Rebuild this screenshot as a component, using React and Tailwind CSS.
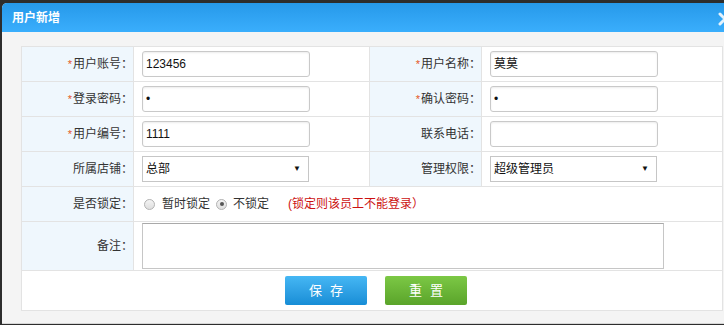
import React from "react";

const cjk = "font-['Liberation_Sans','Noto_Sans_CJK_SC',sans-serif]";

function Label({ required, children }) {
  return (
    <td className="w-[112px] bg-[#eff7fd] border border-[#e3e3e3] pr-[0px] text-right text-[#333] whitespace-nowrap">
      {required && <span className="text-[#e4571c] text-[11px] mr-[1px]">*</span>}
      {children}：
    </td>
  );
}

function TextInput({ value }) {
  return (
    <div className="w-[168px] h-[26px] ml-[8px] border border-[#c9c9c9] rounded-[3px] bg-white shadow-[inset_0_1px_2px_rgba(0,0,0,0.08)] flex items-center px-[3px] text-[#111]">
      {value}
    </div>
  );
}

function SelectBox({ value }) {
  return (
    <div className="w-[167px] h-[26px] ml-[8px] border border-[#c6c6c6] bg-white flex items-center justify-between pl-[3px] pr-[7px] text-[#111]">
      <span>{value}</span>
      <span className="text-[8px] leading-none">▼</span>
    </div>
  );
}

function Radio({ checked }) {
  return (
    <span className="w-[11px] h-[11px] rounded-full border border-[#b3b3b3] bg-linear-to-b from-[#f4f4f4] to-[#dedede] flex items-center justify-center">
      {checked && <span className="w-[4px] h-[4px] rounded-full bg-[#555]" />}
    </span>
  );
}

export default function App() {
  return (
    <div className={`w-[724px] h-[325px] overflow-hidden bg-[#2d2d2d] pt-[3px] pl-[2px] text-[12px] leading-none ${cjk}`}>
      <div className="w-[740px] h-[321px] rounded-tl-[5px] overflow-hidden bg-[#f4f4f4] border-b border-[#d6d6d6]">
        {/* header */}
        <div className="h-[29px] bg-linear-to-b from-[#2699ea] to-[#3aaefc] flex items-center justify-between pl-[10px] pr-[10px]">
          <span className="text-white font-bold text-[12px]">用户新增</span>
          <svg width="14" height="14" viewBox="0 0 14 14" className="mt-[2px]">
            <path d="M2 2 L12 12 M12 2 L2 12" stroke="#e4f2fc" strokeWidth="3" strokeLinecap="round" />
          </svg>
        </div>

        {/* body */}
        <div className="pt-[14px] pl-[19px]">
          <table className="w-[701px] table-fixed border-collapse bg-white border border-[#e3e3e3]">
            <colgroup>
              <col className="w-[112px]" />
              <col className="w-[236px]" />
              <col className="w-[112px]" />
              <col className="w-[241px]" />
            </colgroup>
            <tbody>
              <tr className="h-[35px]">
                <Label required>用户账号</Label>
                <td className="border border-[#e3e3e3]"><TextInput value="123456" /></td>
                <Label required>用户名称</Label>
                <td className="border border-[#e3e3e3]"><TextInput value="莫莫" /></td>
              </tr>
              <tr className="h-[35px]">
                <Label required>登录密码</Label>
                <td className="border border-[#e3e3e3]"><TextInput value="•" /></td>
                <Label required>确认密码</Label>
                <td className="border border-[#e3e3e3]"><TextInput value="•" /></td>
              </tr>
              <tr className="h-[35px]">
                <Label required>用户编号</Label>
                <td className="border border-[#e3e3e3]"><TextInput value="1111" /></td>
                <Label>联系电话</Label>
                <td className="border border-[#e3e3e3]"><TextInput value="" /></td>
              </tr>
              <tr className="h-[35px]">
                <Label>所属店铺</Label>
                <td className="border border-[#e3e3e3]"><SelectBox value="总部" /></td>
                <Label>管理权限</Label>
                <td className="border border-[#e3e3e3]"><SelectBox value="超级管理员" /></td>
              </tr>
              <tr className="h-[35px]">
                <Label>是否锁定</Label>
                <td colSpan={3} className="border border-[#e3e3e3]">
                  <div className="flex items-center ml-[10px] text-[#333]">
                    <Radio />
                    <span className="ml-[7px]">暂时锁定</span>
                    <span className="ml-[6px]"><Radio checked /></span>
                    <span className="ml-[6px]">不锁定</span>
                    <span className="ml-[19px] text-[#cc1111]">(锁定则该员工不能登录）</span>
                  </div>
                </td>
              </tr>
              <tr className="h-[49px]">
                <Label>备注</Label>
                <td colSpan={3} className="border border-[#e3e3e3]">
                  <div className="w-[522px] h-[46px] ml-[8px] border border-[#c6c6c6] border-t-[#a9a9a9] bg-white" />
                </td>
              </tr>
              <tr className="h-[40px]">
                <td colSpan={4} className="border border-[#e3e3e3]">
                  <div className="flex justify-center gap-[18px] pl-[8px]">
                    <button className="w-[82px] h-[29px] rounded-[2px] bg-linear-to-b from-[#45b7f4] to-[#168dd6] text-white text-[13px] flex items-center justify-center gap-[8px]">
                      <span>保</span><span>存</span>
                    </button>
                    <button className="w-[82px] h-[29px] rounded-[2px] bg-linear-to-b from-[#7cc845] to-[#5aa42a] text-white text-[13px] flex items-center justify-center gap-[8px]">
                      <span>重</span><span>置</span>
                    </button>
                  </div>
                </td>
              </tr>
            </tbody>
          </table>
        </div>
      </div>
    </div>
  );
}
